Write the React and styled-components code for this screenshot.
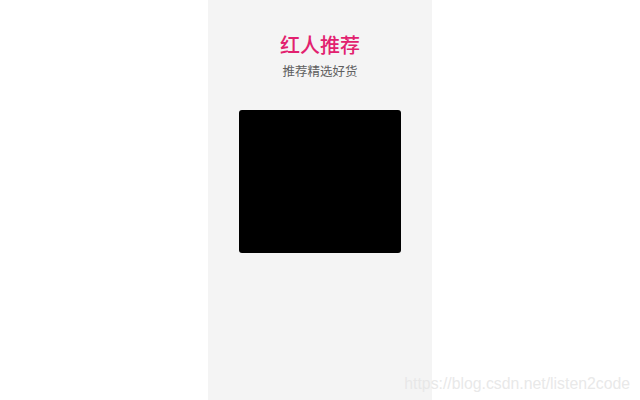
import styled, { createGlobalStyle } from "styled-components";

const GlobalStyle = createGlobalStyle`
  html, body {
    margin: 0;
    padding: 0;
    height: 100%;
    background: #fff;
  }
  #root {
    height: 100%;
  }
`;

const Page = styled.div`
  height: 100vh;
  display: flex;
  justify-content: center;
  position: relative;
  overflow: hidden;
  font-family: "Noto Sans CJK SC", "Noto Sans", sans-serif;
`;

const Column = styled.div`
  width: 224px;
  height: 100%;
  background-color: #f4f4f4;
  display: flex;
  flex-direction: column;
  align-items: center;
  padding-top: 30px;
  box-sizing: border-box;
`;

const Title = styled.h1`
  margin: 0;
  font-size: 20px;
  line-height: 30px;
  font-weight: 500;
  color: #e2216f;
`;

const Subtitle = styled.p`
  margin: 2px 0 0;
  font-size: 12.5px;
  line-height: 18px;
  color: #5f5f5f;
`;

const Cover = styled.div`
  margin-top: 30px;
  width: 162px;
  height: 143px;
  background-color: #000;
  border-radius: 3px;
`;

const Watermark = styled.span`
  position: absolute;
  right: 10px;
  bottom: 7px;
  font-family: "Liberation Sans", Arial, sans-serif;
  font-size: 15.8px;
  color: rgba(230, 230, 230, 0.9);
`;

export default function App() {
  return (
    <>
      <GlobalStyle />
      <Page>
        <Column>
          <Title>红人推荐</Title>
          <Subtitle>推荐精选好货</Subtitle>
          <Cover />
        </Column>
        <Watermark>https://blog.csdn.net/listen2code</Watermark>
      </Page>
    </>
  );
}
